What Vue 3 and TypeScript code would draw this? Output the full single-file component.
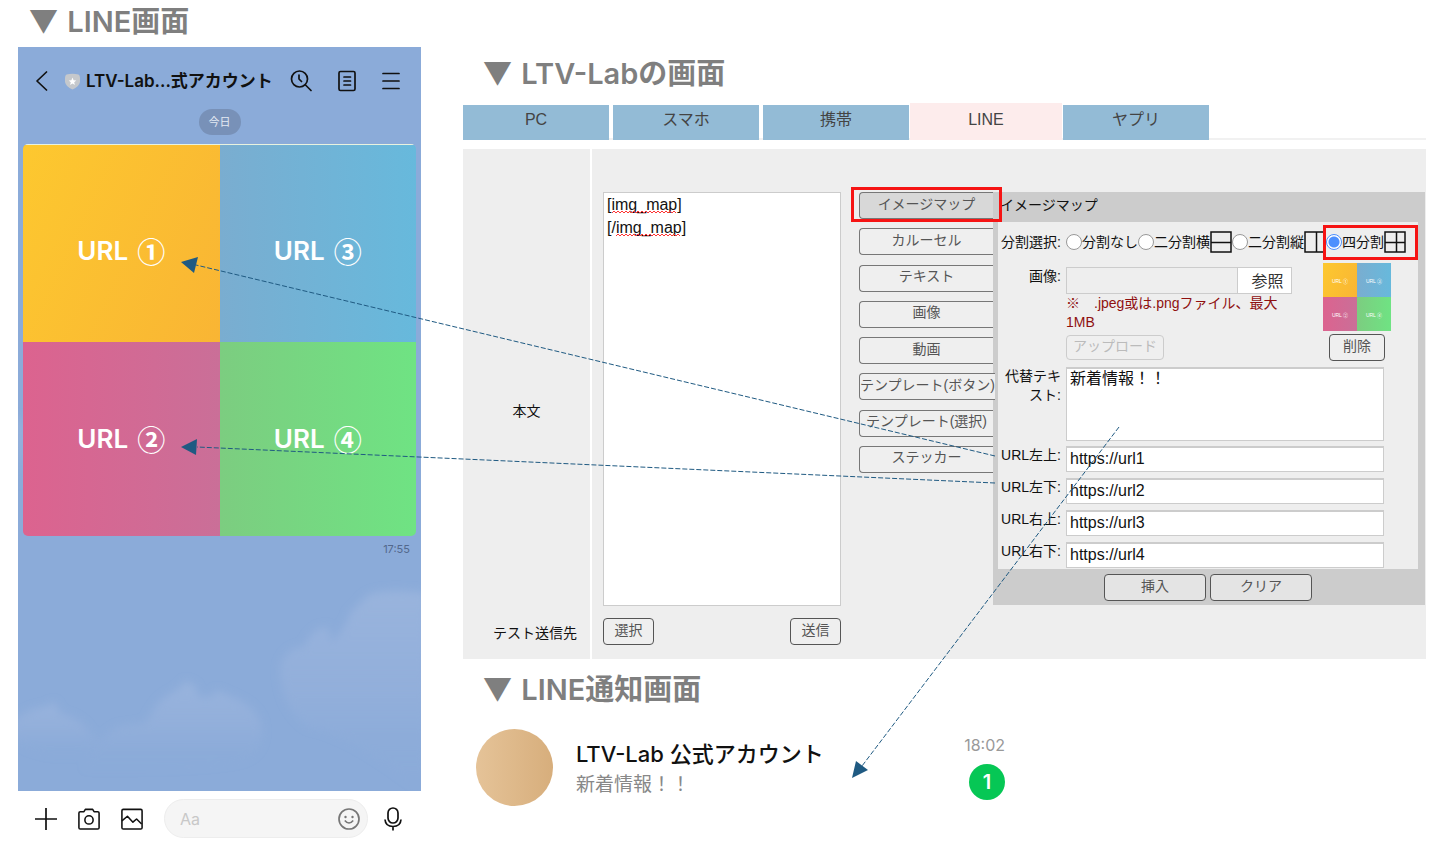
<script setup lang="ts">
import { ref } from 'vue'

interface Tile { name: string; mark: string; tone: string }
interface SplitOption { value: string; label: string; icon: string }
interface UrlField { id: string; label: string; value: string }

const tiles: Tile[] = [
  { name: 'URL', mark: '①', tone: 'yellow' },
  { name: 'URL', mark: '③', tone: 'blue' },
  { name: 'URL', mark: '②', tone: 'pink' },
  { name: 'URL', mark: '④', tone: 'green' },
]

const tabs: string[] = ['PC', 'スマホ', '携帯', 'LINE', 'ヤプリ']
const activeTab = ref('LINE')

const parts: string[] = [
  'イメージマップ', 'カルーセル', 'テキスト', '画像', '動画',
  'テンプレート(ボタン)', 'テンプレート(選択)', 'ステッカー',
]

const splits: SplitOption[] = [
  { value: 'none', label: '分割なし', icon: '' },
  { value: 'rows', label: '二分割横', icon: 'M1 11.500H21' },
  { value: 'cols', label: '二分割縦', icon: 'M12.500 1V21' },
  { value: 'quad', label: '四分割', icon: 'M1 11.500H21M12.500 1V21' },
]
const split = ref('quad')

const body = ref('[img_map]\n[/img_map]')
const altText = ref('新着情報！！')
const message = ref('')
const urls = ref<UrlField[]>([
  { id: 'url-lt', label: 'URL左上:', value: 'https://url1' },
  { id: 'url-lb', label: 'URL左下:', value: 'https://url2' },
  { id: 'url-rt', label: 'URL右上:', value: 'https://url3' },
  { id: 'url-rb', label: 'URL右下:', value: 'https://url4' },
])

function wave(width: number): string {
  let d = 'M0 3'
  for (let x = 2, up = true; x <= width; x += 2, up = !up) d += `L${x} ${up ? 1 : 3}`
  return d
}
</script>

<template>
  <main class="page">
    <section class="left">
      <h2 class="heading"><span class="marker">▼</span> LINE画面</h2>
      <div class="phone">
        <div class="chat">
          <svg class="clouds" viewBox="0 0 403 744" preserveAspectRatio="none" aria-hidden="true">
            <defs>
              <linearGradient id="mist" x1="0" y1="0" x2="0" y2="1">
                <stop offset="0" stop-color="#99b4dd" />
                <stop offset="0.5" stop-color="#94b0db" stop-opacity="0.8" />
                <stop offset="1" stop-color="#8babd9" stop-opacity="0" />
              </linearGradient>
              <filter id="soft"><feGaussianBlur stdDeviation="4" /></filter>
            </defs>
            <g fill="url(#mist)" filter="url(#soft)">
              <path d="M-6 674Q14 660 28 660L36 655L42 666Q64 672 72 686L82 696Q62 716 30 708Q6 702 -6 690Z" />
              <path d="M64 724Q80 690 100 680L128 676Q140 650 158 644L168 634L178 640L180 650L194 650L198 643L214 650Q240 660 244 680Q246 712 214 716Q150 726 64 724Z" />
              <path d="M262 620Q268 600 286 600Q294 580 310 580L314 596Q330 576 332 566L348 550Q360 540 408 546V750Q340 690 290 680Q262 660 262 620Z" />
              <path d="M-4 370Q8 366 8 420Q0 440 -4 440Z" />
            </g>
          </svg>
          <header class="chat-head">
            <button class="icon-btn" type="button" aria-label="戻る">
              <svg width="12" height="20" viewBox="0 0 12 20"><path d="M10.500 1L1 10L10.500 19" /></svg>
            </button>
            <svg class="shield" width="15" height="17" viewBox="0 0 15 17" aria-hidden="true">
              <path d="M1.500 1.500Q7.500 0 13.500 1.500Q15 2 15 5V9Q14 14 7.500 16.500Q1 14 0 9V5Q0 2 1.500 1.500Z" fill="#c5c8cc" />
              <path d="M7.500 4.500L8.600 7.200L11.300 7.400L9.200 9.200L9.900 12L7.500 10.500L5.100 12L5.800 9.200L3.700 7.400L6.400 7.200Z" fill="#fff" />
            </svg>
            <h1 class="chat-title">LTV-Lab...式アカウント</h1>
            <nav class="chat-tools">
              <button class="icon-btn" type="button" aria-label="検索">
                <svg width="22" height="22" viewBox="0 0 22 22"><circle cx="9.500" cy="9" r="8" /><path d="M15.500 15L21 20.500M9 5V9L11.500 11.500" /></svg>
              </button>
              <button class="icon-btn" type="button" aria-label="ノート">
                <svg width="18" height="22" viewBox="0 0 18 22"><rect x="1" y="1.500" width="16" height="19" rx="1.500" /><path d="M6 7H12.500M6 11H12.500M6 15H12.500" /></svg>
              </button>
              <button class="icon-btn" type="button" aria-label="メニュー">
                <svg width="18" height="22" viewBox="0 0 18 22"><path d="M1 3.500H17M1 11H17M1 18.500H17" /></svg>
              </button>
            </nav>
          </header>
          <p class="day">今日</p>
          <div class="imagemap">
            <a v-for="t in tiles" :key="t.mark" href="#" class="tile" :class="t.tone">{{ t.name }} <span class="mark">{{ t.mark }}</span></a>
          </div>
          <time class="sent">17:55</time>
        </div>
        <footer class="composer">
          <button class="icon-btn" type="button" aria-label="追加">
            <svg width="22" height="24" viewBox="0 0 22 24"><path d="M0 12H22M11 1V23" /></svg>
          </button>
          <button class="icon-btn" type="button" aria-label="カメラ">
            <svg width="22" height="24" viewBox="0 0 24 24"><path d="M2.500 4H6.500L8 1.500H16L17.500 4H21.500Q23 4 23 5.500V21.500Q23 23 21.500 23H2.500Q1 23 1 21.500V5.500Q1 4 2.500 4Z" /><circle cx="12" cy="13" r="4.500" /></svg>
          </button>
          <button class="icon-btn" type="button" aria-label="画像">
            <svg width="22" height="24" viewBox="0 0 24 24"><rect x="1" y="1.500" width="22" height="21.500" rx="1.500" /><path d="M1 14L7 9L13 15.500L17 12L22.500 17.500" /></svg>
          </button>
          <div class="entry">
            <div class="message">
              <input v-model="message" type="text" placeholder="Aa" aria-label="メッセージ">
              <button class="icon-btn smile" type="button" aria-label="スタンプ">
                <svg width="22" height="22" viewBox="0 0 22 22"><circle cx="11" cy="11" r="10" /><path d="M6.800 12.500Q11 17.500 15.200 12.500" /><circle class="eye" cx="7.500" cy="9" r="1.200" /><circle class="eye" cx="14.500" cy="9" r="1.200" /></svg>
              </button>
            </div>
            <button class="icon-btn" type="button" aria-label="音声">
              <svg width="18" height="24" viewBox="0 0 18 24"><rect x="4" y="1" width="10" height="15" rx="5" /><path d="M1 12.500Q1.500 19.500 9 19.500T17 12.500M9 19.500V23.500" /></svg>
            </button>
          </div>
        </footer>
      </div>
    </section>

    <section class="right">
      <h2 class="heading editor-heading"><span class="marker">▼</span> LTV-Labの画面</h2>
      <div class="tabs" role="tablist">
        <button
          v-for="t in tabs" :key="t" type="button" role="tab" class="tab"
          :class="{ active: t === activeTab }" :aria-selected="t === activeTab" @click="activeTab = t"
        >{{ t }}</button>
      </div>

      <form class="panel" @submit.prevent>
        <label class="side side-body" for="body">本文</label>
        <div class="content">
          <div class="body-box">
            <textarea id="body" v-model="body" spellcheck="false"></textarea>
            <svg class="squiggle first" width="64" height="4" aria-hidden="true"><path :d="wave(64)" /></svg>
            <svg class="squiggle second" width="64" height="4" aria-hidden="true"><path :d="wave(64)" /></svg>
          </div>
          <div class="parts">
            <div v-for="(p, i) in parts" :key="p" class="part" :class="{ picked: i === 0 }">
              <button type="button" class="btn">{{ p }}</button>
            </div>
          </div>

          <section class="dialog" aria-labelledby="dialog-title">
            <h3 id="dialog-title">イメージマップ</h3>
            <div class="fields">
              <div class="row splits" role="radiogroup" aria-labelledby="split-label">
                <span id="split-label" class="label">分割選択:</span>
                <div class="options">
                  <label v-for="s in splits" :key="s.value" class="option" :class="{ marked: s.value === 'quad' }">
                    <input v-model="split" type="radio" name="split" :value="s.value">{{ s.label }}<svg v-if="s.icon" width="22" height="22" viewBox="0 0 22 22" aria-hidden="true"><rect x="1" y="1" width="20" height="20" /><path :d="s.icon" /></svg>
                  </label>
                </div>
              </div>

              <div class="row image-row">
                <label class="label" for="image-file">画像:</label>
                <div class="image-fields">
                  <div class="upload">
                    <div class="file">
                      <input id="image-file" type="text" readonly>
                      <button type="button">参照</button>
                    </div>
                    <p class="note">※　.jpeg或は.pngファイル、最大<br>1MB</p>
                    <button type="button" class="btn" disabled>アップロード</button>
                  </div>
                  <div class="preview">
                    <div class="thumb">
                      <span v-for="t in tiles" :key="t.mark" :class="t.tone">{{ t.name }} {{ t.mark }}</span>
                    </div>
                    <button type="button" class="btn">削除</button>
                  </div>
                </div>
              </div>

              <div class="row alt-row">
                <label class="label" for="alt">代替テキスト:</label>
                <textarea id="alt" v-model="altText" class="field"></textarea>
              </div>

              <div v-for="u in urls" :key="u.id" class="row url-row">
                <label class="label" :for="u.id">{{ u.label }}</label>
                <input :id="u.id" v-model="u.value" type="text" class="field">
              </div>
            </div>
            <div class="dialog-foot">
              <button type="button" class="btn">挿入</button>
              <button type="button" class="btn">クリア</button>
            </div>
          </section>
        </div>

        <span class="side side-test">テスト送信先</span>
        <div class="test">
          <button type="button" class="btn">選択</button>
          <button type="button" class="btn">送信</button>
        </div>
      </form>

      <h2 class="heading notice-heading"><span class="marker">▼</span> LINE通知画面</h2>
      <article class="notice">
        <div class="avatar"></div>
        <div class="notice-text">
          <h3>LTV-Lab 公式アカウント</h3>
          <p>新着情報！！</p>
        </div>
        <div class="notice-meta">
          <time>18:02</time>
          <span class="badge">1</span>
        </div>
      </article>
    </section>

    <svg class="arrows" viewBox="0 0 1434 852" preserveAspectRatio="none" aria-hidden="true">
      <path class="dash" d="M995 456L196 265M995 483L197 447M1119 427L862 766" />
      <path class="tip" d="M181 262L198 257L194 273ZM181 447L197 439L196 455ZM852 778L856 761L868 770Z" />
    </svg>
  </main>
</template>

<style>
body { margin: 0; background: #fff; }
</style>

<style scoped>
* { box-sizing: border-box; }
h1, h2, h3, p { margin: 0; }
button, input, textarea { font-family: inherit; margin: 0; }
button { cursor: pointer; }

.page {
  position: relative;
  display: grid;
  grid-template-columns: minmax(0, 403fr) minmax(0, 963fr);
  column-gap: 42px;
  padding: 0 8px 0 18px;
  min-height: 100vh;
  font-family: "Liberation Sans", "Noto Sans CJK JP", sans-serif;
}
.heading {
  padding-left: 11px;
  font: 600 29px/44px Inter, "Noto Sans CJK JP", sans-serif;
  color: #7f7f7f;
  white-space: nowrap;
}
.marker { margin-right: 2px; font-family: "Noto Sans CJK JP", sans-serif; line-height: 1; }
.left { display: flex; flex-direction: column; gap: 3px; min-width: 0; }
.phone {
  display: flex;
  flex-direction: column;
  flex: 1;
  font-family: Inter, "Noto Sans CJK JP", sans-serif;
}
.chat {
  position: relative;
  display: flex;
  flex-direction: column;
  flex: 1;
  padding: 0 5px;
  background: #8babd9;
}
.clouds { position: absolute; inset: 0; width: 100%; height: 100%; }
.chat > :not(.clouds) { position: relative; }
.icon-btn {
  display: flex;
  flex: none;
  padding: 0;
  border: 0;
  background: none;
}
.icon-btn svg { fill: none; stroke: #111; stroke-width: 1.7; stroke-linecap: round; stroke-linejoin: round; }
.chat-head {
  display: flex;
  align-items: center;
  height: 62px;
  padding: 6px 16px 0 13px;
}
.shield { flex: none; margin: 0 6px 0 17px; }
.chat-title { font-size: 17px; line-height: 24px; font-weight: 600; color: #111; white-space: nowrap; }
.chat-tools { display: flex; gap: 26px; margin-left: auto; }
.day {
  align-self: center;
  margin-bottom: 9px;
  padding: 0 10px;
  border-radius: 13px;
  background: #7891b8;
  color: #e4eaf3;
  font-size: 11px;
  line-height: 26px;
}
.imagemap {
  display: grid;
  grid-template: 198px 194px / 1fr 1fr;
  border-radius: 5px;
  overflow: hidden;
}
.tile {
  display: flex;
  align-items: center;
  justify-content: center;
  gap: 9px;
  color: #fff;
  font-size: 26px;
  font-weight: 600;
  line-height: 40px;
  text-decoration: none;
}
.mark { font-family: "Noto Sans CJK JP", sans-serif; font-size: 28px; }
.imagemap .yellow, .imagemap .blue { padding-top: 15px; border-top: 1px solid #e8f2df; }
.yellow { background: linear-gradient(115deg, #fdc82f, #f9b534); }
.blue { background: linear-gradient(90deg, #7aadd0, #67b9dc); }
.pink { background: linear-gradient(90deg, #dc638f, #ca6f98); }
.green { background: linear-gradient(90deg, #7ccd80, #6fe383); }
.sent {
  align-self: flex-end;
  margin: 5px 6px 0 0;
  color: #53688c;
  font-size: 11px;
  line-height: 16px;
}
.composer {
  display: flex;
  align-items: center;
  height: 61px;
  padding: 0 19px 6px 17px;
  gap: 21px;
}
.composer .icon-btn svg { stroke-linecap: butt; }
.entry { display: flex; flex: 1; align-items: center; gap: 16px; min-width: 0; }
.message {
  display: flex;
  align-items: center;
  flex: 1;
  min-width: 0;
  height: 39px;
  padding: 0 7px 0 15px;
  border: 1px solid #ededed;
  border-radius: 20px;
  background: #f5f5f5;
}
.message input {
  flex: 1;
  min-width: 0;
  padding: 0;
  border: 0;
  background: none;
  font-size: 16px;
  outline: none;
}
.message input::placeholder { color: #c8c8c8; opacity: 1; }
.composer .smile svg { stroke: #777; }
.composer .smile .eye { fill: #777; stroke: none; }

.right { min-width: 0; }
.right > .heading { padding-left: 20px; }
.right > .editor-heading { margin-top: 52px; }
.tabs {
  display: flex;
  align-items: flex-end;
  gap: 4px;
  height: 37px;
  margin-top: 7px;
  border-bottom: 2px solid #f1f1f1;
}
.tab {
  flex: 0 1 146px;
  height: 35px;
  margin-bottom: -2px;
  padding: 0 0 6px;
  border: 0;
  background: #93bbd6;
  color: #444;
  font-size: 16px;
  line-height: 24px;
}
.tab.active {
  flex-basis: 152px;
  height: 37px;
  margin-left: -3px;
  margin-right: -3px;
  padding-bottom: 4px;
  background: #fdecec;
}
.panel {
  display: grid;
  grid-template-columns: 129px minmax(0, 1fr);
  grid-template-rows: auto auto;
  margin-top: 9px;
  background: #eee;
}
.side {
  display: flex;
  align-items: center;
  border-right: 2px solid #fff;
  font-size: 14px;
  color: #111;
}
.side-body { justify-content: center; padding-top: 64px; }
.side-test { justify-content: flex-end; padding: 0 13px 2px 0; }
.content {
  display: grid;
  grid-template-columns: minmax(180px, 238fr) 18px 134px minmax(420px, 432fr);
  padding: 43px 1px 0 11px;
  align-items: start;
}
.body-box { position: relative; height: 414px; }
.body-box textarea {
  display: block;
  width: 100%;
  height: 100%;
  padding: 0 3px;
  border: 1px solid #ccc;
  background: #fff;
  color: #111;
  font-size: 16px;
  line-height: 23px;
  resize: none;
}
.squiggle { position: absolute; fill: none; stroke: #f33; }
.squiggle.first { left: 9px; top: 18px; }
.squiggle.second { left: 13px; top: 41px; }
.parts {
  grid-column: 3;
  display: flex;
  flex-direction: column;
  justify-content: space-between;
  height: 281px;
}
.btn {
  height: 27px;
  padding: 0 0 4px;
  border: 1px solid #777;
  border-radius: 4px;
  background: #efefef;
  color: #555;
  font-size: 14px;
  line-height: 20px;
  white-space: nowrap;
}
.part { position: relative; display: flex; }
.part .btn { flex: 1; border-right: 0; border-radius: 4px 0 0 4px; }
.picked .btn { background: #d8d8d8; }
.picked::after {
  content: "";
  position: absolute;
  z-index: 2;
  inset: -5px -9px -3px -8px;
  border: 3px solid #f61414;
}

.dialog { background: #ccc; color: #111; padding: 0 7px 0 5px; font-size: 14px; }
.dialog h3 { padding: 0 2px; font-size: 14px; font-weight: 400; line-height: 26px; height: 30px; }
.fields {
  height: 347px;
  padding-right: 27px;
  overflow: hidden;
  background: #eee;
}
.row { display: grid; grid-template-columns: 63px minmax(0, 1fr); column-gap: 5px; }
.label { text-align: right; line-height: 19px; }
.splits { height: 40px; align-items: center; }
.splits .label { white-space: nowrap; }
.options { display: flex; }
.option { position: relative; display: flex; align-items: center; flex: none; line-height: 20px; }
.option input {
  appearance: none;
  width: 16px;
  height: 16px;
  border: 1px solid #999;
  border-radius: 50%;
  background: #fff;
}
.option input:checked { border-color: #4d90fe; background: radial-gradient(circle, #4d90fe 5px, #fff 6px); }
.option svg { flex: none; fill: none; stroke: #111; stroke-width: 1.5; }
.marked::after {
  content: "";
  position: absolute;
  inset: -6px -12px -7px -3px;
  border: 3px solid #f61414;
}
.image-row { height: 105px; }
.image-row .label { padding-top: 5px; }
.image-fields { display: flex; justify-content: space-between; }
.upload { width: 226px; padding-top: 5px; }
.file { display: flex; height: 27px; border: 1px solid #ccc; }
.file input { flex: 1; min-width: 0; padding: 0 4px; border: 0; background: #eee; }
.file button {
  width: 54px;
  padding: 0 0 3px 6px;
  border: 0;
  border-left: 1px solid #ccc;
  background: #fff;
  color: #333;
  font-size: 16px;
}
.note { color: #8f1010; line-height: 19px; white-space: nowrap; }
.upload .btn { width: 98px; height: 25px; margin-top: 3px; }
.btn:disabled { border-color: #ccc; color: #bbb; cursor: default; }
.preview { display: flex; flex-direction: column; align-items: center; gap: 3px; }
.thumb { display: grid; grid-template: 34px 34px / 34px 34px; margin-top: 1px; }
.thumb span {
  display: flex;
  align-items: center;
  justify-content: center;
  color: #fff;
  font-size: 5px;
}
.preview .btn { width: 56px; border-color: #555; }
.field {
  margin-right: 7px;
  min-width: 0;
  padding: 0 4px;
  border: 1px solid #ccc;
  border-top-width: 2px;
  background: #fff;
  color: #111;
  font-size: 16px;
  line-height: 20px;
}
textarea.field { height: 74px; padding: 0 3px; resize: none; overflow: hidden; }
.alt-row { margin-bottom: 5px; }
.url-row { height: 26px; margin-bottom: 6px; }
.url-row .field { padding: 0 3px 2px; }
.dialog-foot { display: flex; justify-content: center; gap: 4px; padding: 5px 0 4px; }
.dialog-foot .btn { width: 102px; background: #e4e4e4; border-color: #555; }
.test {
  display: flex;
  justify-content: space-between;
  width: 260px;
  padding: 12px 11px 14px;
}
.test .btn { width: 51px; border-color: #555; }

.right > .notice-heading { margin-top: 9px; }
.notice {
  display: flex;
  align-items: center;
  max-width: 542px;
  margin-top: 17px;
  padding-left: 13px;
  font-family: Inter, "Noto Sans CJK JP", sans-serif;
}
.avatar {
  flex: none;
  width: 77px;
  height: 77px;
  border-radius: 50%;
  background: linear-gradient(90deg, #e5c398, #d7ae7c);
}
.notice-text { flex: 1; padding: 2px 0 0 23px; }
.notice-text h3 { font-size: 22px; line-height: 32px; font-weight: 500; color: #111; }
.notice-text p { font-size: 19px; line-height: 30px; color: #888; }
.notice-meta { display: flex; flex-direction: column; align-items: flex-end; gap: 9px; }
.notice-meta time { font-size: 16px; line-height: 20px; color: #999; }
.badge {
  width: 36px;
  height: 36px;
  border-radius: 50%;
  background: #06c755;
  color: #fff;
  font-size: 20px;
  font-weight: 600;
  line-height: 36px;
  text-align: center;
}
.arrows {
  position: absolute;
  z-index: 5;
  left: 0;
  top: 0;
  width: 100%;
  height: 852px;
  pointer-events: none;
}
.dash { fill: none; stroke: #1f5a82; stroke-width: 1; stroke-dasharray: 5 2; }
.tip { fill: #1f5a82; }
</style>
